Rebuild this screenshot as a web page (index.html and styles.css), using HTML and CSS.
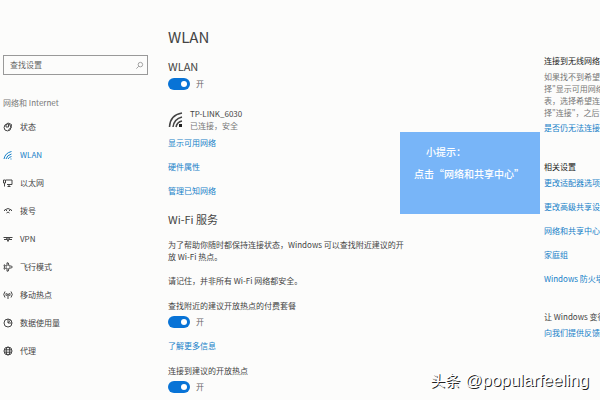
FILE: index.html
```
<!DOCTYPE html>
<html lang="zh-CN">
<head>
    <meta charset="UTF-8">
    <title>WLAN</title>
    <link rel="stylesheet" href="styles.css">
</head>
<body>
    <div class="settings">
        <nav class="sidebar">
            <div class="search">
                <input type="text" id="search" placeholder="查找设置" aria-label="查找设置">
                <svg class="search-icon" viewBox="0 0 10 10"><circle cx="6" cy="4" r="2.5"/><path d="M4.2 5.8L1.5 8.5"/></svg>
            </div>
            <h2 class="group-title">网络和 Internet</h2>
            <a href="#" class="nav-item">
                <svg class="icon" viewBox="0 0 10 10"><circle cx="4.5" cy="5.5" r="3.4"/><path d="M3 5V2.500L5 1l3.500 1.500L8 6L5.500 7.500M3 5h2.500V3"/></svg>
                <span>状态</span>
            </a>
            <a href="#" class="nav-item active">
                <svg class="icon" viewBox="0 0 10 10"><path d="M1 9Q2 3 8.500 1.500M3 9Q4 5 8.500 4M5 9Q6 7 8.500 6.500M7.500 9h1"/></svg>
                <span>WLAN</span>
            </a>
            <a href="#" class="nav-item">
                <svg class="icon" viewBox="0 0 10 10"><path d="M3 2h6v4.500h-5M.5 2h2v3h-2zM1.500 5v3.500M4.500 8.500h3M6 6.500v2"/></svg>
                <span>以太网</span>
            </a>
            <a href="#" class="nav-item">
                <svg class="icon" viewBox="0 0 10 10"><path d="M1.500 5V4Q5 1 8.500 4v1M3.500 5V4M6.500 5V4M3.500 7Q5 5 6.500 7"/></svg>
                <span>拨号</span>
            </a>
            <a href="#" class="nav-item">
                <svg class="icon" viewBox="0 0 10 10"><path d="M.5 3.500h9M1 5.500h3M6 5.500h3M3.500 4l1.500 3.500L6.500 4M5 4v2"/></svg>
                <span>VPN</span>
            </a>
            <a href="#" class="nav-item">
                <svg class="icon" viewBox="0 0 10 10"><path d="M4 .8L5.300 1L6 4h2.500q1.500 1 0 2H6L5.300 9L4 9.200V6H2.500L1.500 7.300L1 7L1.500 5L1 3L1.500 2.700L2.500 4H4z"/></svg>
                <span>飞行模式</span>
            </a>
            <a href="#" class="nav-item">
                <svg class="icon" viewBox="0 0 10 10"><circle cx="5" cy="4.500" r=".7"/><path d="M5 5v4M2 1.500Q-.5 4.500 2 7.500M8 1.500Q10.500 4.500 8 7.500M3.400 3Q2.500 4.500 3.400 6M6.600 3Q7.500 4.500 6.600 6"/></svg>
                <span>移动热点</span>
            </a>
            <a href="#" class="nav-item">
                <svg class="icon" viewBox="0 0 10 10"><circle cx="5" cy="5" r="4"/><path d="M5 1v4h4M5 5L7.500 2"/></svg>
                <span>数据使用量</span>
            </a>
            <a href="#" class="nav-item">
                <svg class="icon" viewBox="0 0 10 10"><circle cx="5" cy="5" r="4"/><ellipse cx="5" cy="5" rx="1.800" ry="4"/><path d="M1 3.800h8M1 6.200h8"/></svg>
                <span>代理</span>
            </a>
        </nav>

        <main class="content">
            <h1 class="page-title">WLAN</h1>
            <h2 class="wlan-title">WLAN</h2>
            <label class="toggle"><input type="checkbox" class="switch" checked>开</label>
            <div class="network">
                <svg class="wifi-icon" viewBox="0 0 16 18"><path d="M1.500 16Q2 4 14 2M5 16Q6 8 14 6M8 16Q9 11 14 10"/><rect x="11" y="13" width="3" height="3"/></svg>
                <div>
                    <div class="network-name">TP-LINK_6030</div>
                    <div class="network-state">已连接，安全</div>
                </div>
            </div>
            <div class="links">
                <a href="#">显示可用网络</a>
                <a href="#">硬件属性</a>
                <a href="#">管理已知网络</a>
            </div>
            <h2 class="service-title">Wi-Fi 服务</h2>
            <p class="text">为了帮助你随时都保持连接状态，Windows 可以查找附近建议的开<br>放 Wi-Fi 热点。</p>
            <p class="text">请记住，并非所有 Wi-Fi 网络都安全。</p>
            <p class="option">查找附近的建议开放热点的付费套餐</p>
            <label class="toggle"><input type="checkbox" class="switch" checked>开</label>
            <a href="#" class="more">了解更多信息</a>
            <p class="option">连接到建议的开放热点</p>
            <label class="toggle"><input type="checkbox" class="switch" checked>开</label>
        </main>

        <aside class="related">
            <h3 class="related-title">连接到无线网络</h3>
            <p class="help">如果找不到希望<br>择"显示可用网络<br>表，选择希望连<br>择"连接"，之后</p>
            <a href="#" class="help-link">是否仍无法连接</a>
            <h3 class="related-title">相关设置</h3>
            <div class="related-links">
                <a href="#">更改适配器选项</a>
                <a href="#">更改高级共享设</a>
                <a href="#">网络和共享中心</a>
                <a href="#">家庭组</a>
                <a href="#">Windows 防火墙</a>
            </div>
            <h3 class="feedback-title">让 Windows 变得</h3>
            <a href="#">向我们提供反馈</a>
        </aside>
    </div>

    <div class="tip">
        <p class="tip-title">小提示：</p>
        <p>点击“网络和共享中心”</p>
    </div>
    <div class="watermark"><span class="brand">头条</span> @popularfeeling</div>
</body>
</html>
```
FILE: styles.css
```
* {
    box-sizing: border-box;
}
body {
    margin: 0;
    background: #fcfcfb;
    color: #444;
    font-family: "Noto Sans CJK SC", sans-serif;
    font-size: 8px;
    line-height: 12px;
    overflow: hidden;
}
h1, h2, h3, p {
    margin: 0;
    font-weight: normal;
}
a {
    color: #1680c8;
    text-decoration: none;
}
.settings {
    display: grid;
    grid-template-columns: 28% 1fr 56px;
    height: 100vh;
    overflow: hidden;
    white-space: nowrap;
}
.sidebar {
    padding: 55px 20px 0 3px;
}
.search {
    display: flex;
    align-items: center;
    height: 20px;
    border: 1px solid #999;
    padding: 0 3px 0 6px;
}
.search input {
    flex: 1;
    min-width: 0;
    padding: 0;
    border: 0;
    outline: 0;
    background: none;
    font: inherit;
}
.search input::placeholder {
    color: #666;
}
.search-icon {
    width: 9px;
    height: 9px;
    fill: none;
    stroke: #999;
}
.group-title {
    margin: 22px 0 4px;
    color: #777;
    font-size: 8px;
    line-height: 12px;
}
.nav-item {
    display: flex;
    align-items: center;
    gap: 7px;
    height: 28px;
    color: #444;
}
.nav-item.active {
    color: #1680c8;
}
.icon {
    width: 10px;
    height: 10px;
    fill: none;
    stroke: currentColor;
    stroke-width: 1;
}
.content {
    padding: 26px 0 0;
}
.page-title {
    font-size: 15px;
    line-height: 22px;
}
.wlan-title {
    margin-top: 10px;
    font-size: 11px;
    line-height: 16px;
}
.toggle {
    display: flex;
    align-items: center;
    gap: 6px;
    height: 12px;
    margin-top: 4px;
    color: #666;
}
.switch {
    appearance: none;
    width: 22px;
    height: 12px;
    margin: 0;
    padding: 3px;
    border-radius: 6px;
    background: #0873d6;
}
.switch::before {
    content: "";
    display: block;
    width: 6px;
    height: 6px;
    margin-left: auto;
    border-radius: 50%;
    background: #fff;
}
.network {
    display: flex;
    align-items: center;
    gap: 6px;
    margin-top: 18px;
}
.wifi-icon {
    width: 16px;
    height: 18px;
    fill: none;
    stroke: #444;
    stroke-width: 1.500;
}
.wifi-icon rect {
    fill: #222;
    stroke: none;
}
.network-state {
    color: #777;
}
.links {
    display: grid;
    gap: 12px;
    margin-top: 5px;
    justify-items: start;
}
.service-title {
    margin-top: 14px;
    font-size: 11px;
    line-height: 16px;
}
.text {
    margin-top: 12px;
}
.option {
    margin-top: 13px;
}
.more {
    display: block;
    margin-top: 12px;
}
.related {
    padding-top: 55px;
}
.related-title {
    font-size: 8px;
    line-height: 12px;
    color: #222;
}
.help {
    margin-top: 4px;
    color: #777;
}
.help-link {
    display: block;
    margin: 3px 0 27px;
}
.related-links {
    display: grid;
    gap: 12px;
    margin-top: 4px;
}
.feedback-title {
    margin: 26px 0 4px;
    font-size: 8px;
    line-height: 12px;
}
.tip {
    position: absolute;
    top: 132px;
    right: 10%;
    width: 140px;
    height: 82px;
    padding: 9px 0 0 14px;
    background: #78b5f8;
    color: #fff;
    font-size: 10px;
    line-height: 22px;
    white-space: nowrap;
}
.tip p {
    font-weight: 500;
}
.tip .tip-title {
    padding-left: 12px;
}
.watermark {
    position: absolute;
    right: 11px;
    bottom: 8px;
    color: #fff;
    font-family: "Liberation Sans", "Noto Sans CJK SC", sans-serif;
    font-size: 17px;
    line-height: 22px;
    text-shadow: 1px 1px 0 #222;
}
.brand {
    font-size: 15px;
}
```
